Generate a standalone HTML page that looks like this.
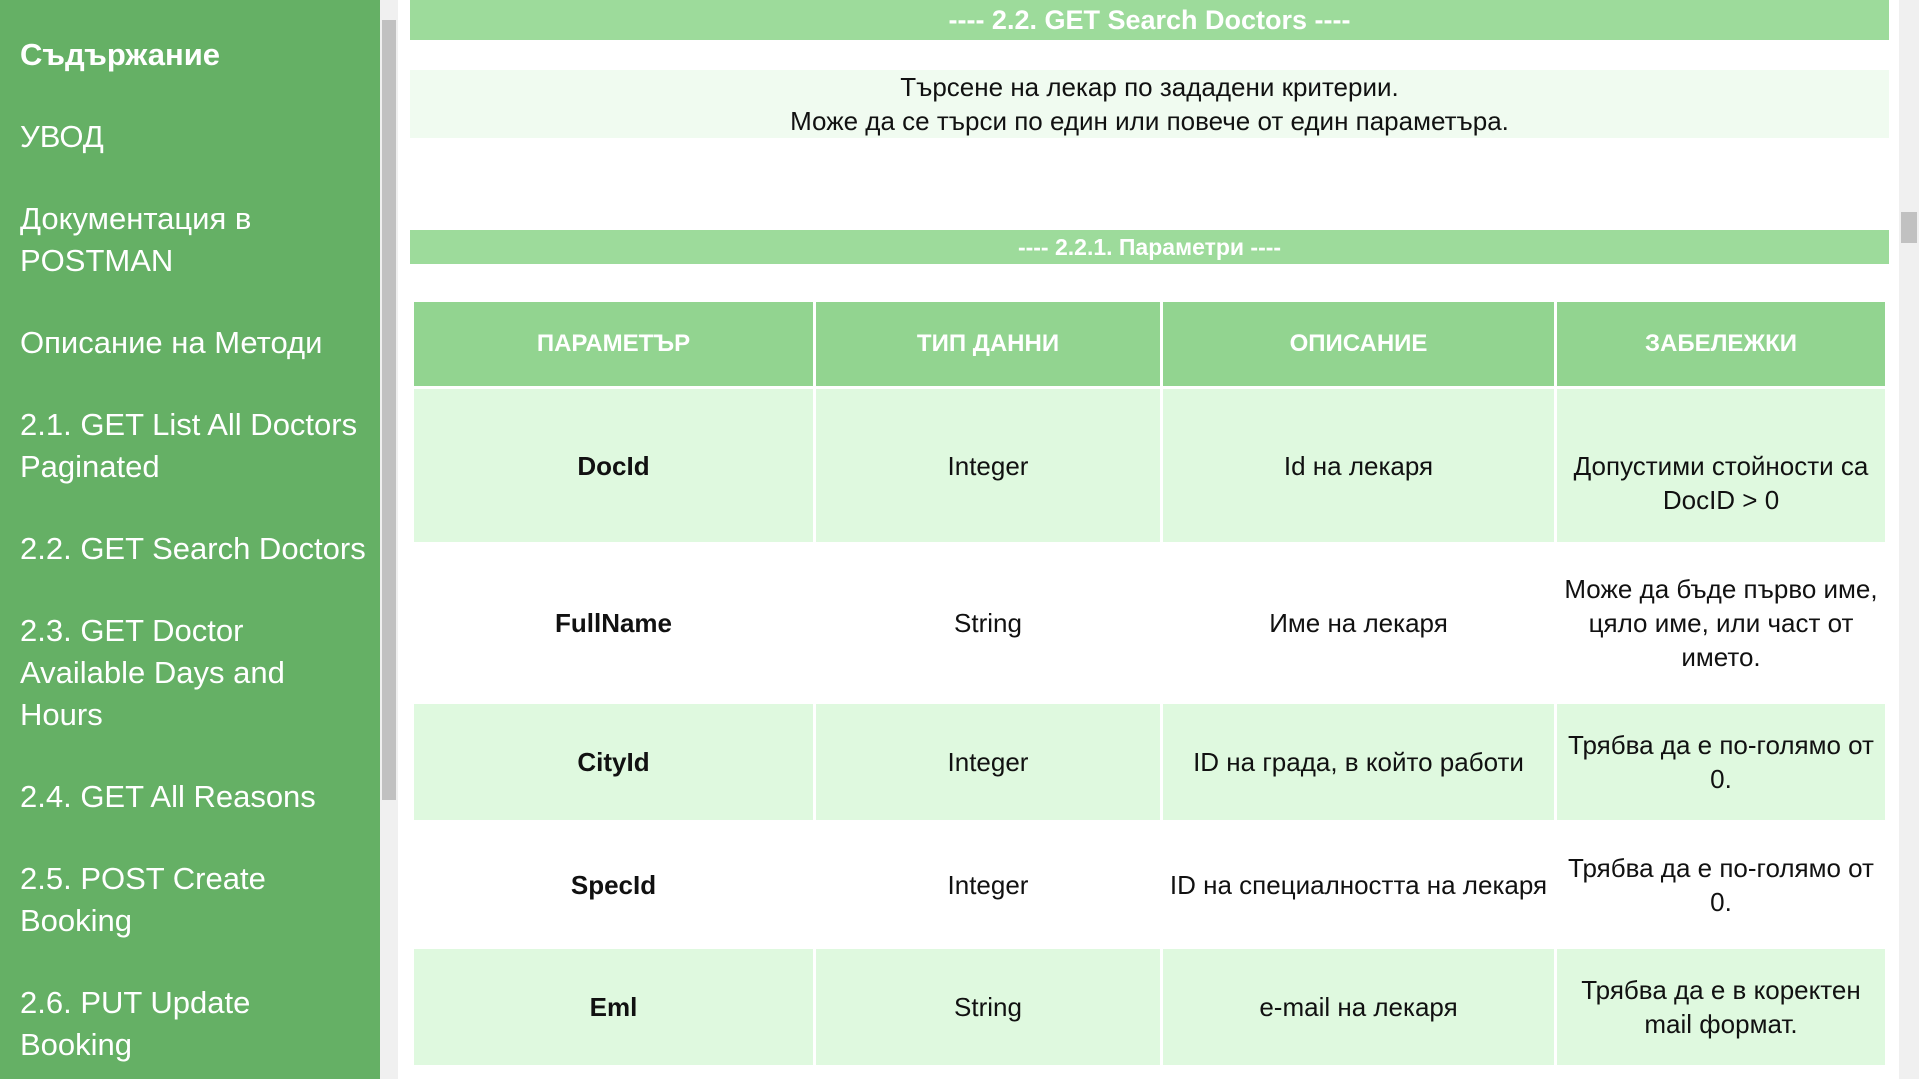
<!DOCTYPE html>
<html><head><meta charset="utf-8"><style>
*{margin:0;padding:0;box-sizing:border-box}
html,body{overflow:hidden}
body{width:1919px;height:1079px;background:#fff;font-family:"Liberation Sans",sans-serif;position:relative}
#side{position:absolute;left:0;top:0;width:380px;height:1079px;background:#65b065;color:#fff;padding:34px 0 0 20px;overflow:hidden}
#side div{font-size:31px;line-height:42px;margin-bottom:40px;white-space:nowrap}
#side div.h{font-weight:bold;margin-bottom:40px}
#sb{position:absolute;left:380px;top:0;width:18px;height:1079px;background:#f0f0f0}
#sb i{position:absolute;left:2px;top:20px;width:14px;height:780px;background:#c1c1c1}
#psb{position:absolute;left:1899px;top:0;width:20px;height:1079px;background:#f0f0f0}
#psb i{position:absolute;left:2px;top:212px;width:16px;height:31px;background:#c1c1c1}
.bar{position:absolute;left:410px;width:1479px;background:#9ddb9b;color:#fff;font-weight:bold;text-align:center}
#desc{position:absolute;left:410px;top:70px;width:1479px;height:68px;background:#f0fbf0;text-align:center;font-size:26px;line-height:34px;color:#111}
table{position:absolute;left:411px;top:299px;width:1477px;border-collapse:collapse;font-size:26px;color:#111}
td,th{border:3px solid #fff;text-align:center;line-height:34px;padding:0 6px}
th{background:#92d490;color:#fff;height:87px;font-size:24px}
tr.g td{background:#dff9df}
td.b{font-weight:bold}
</style></head><body>
<div id="side">
<div class="h">Съдържание</div>
<div>УВОД</div>
<div>Документация в<br>POSTMAN</div>
<div>Описание на Методи</div>
<div>2.1. GET List All Doctors<br>Paginated</div>
<div>2.2. GET Search Doctors</div>
<div>2.3. GET Doctor<br>Available Days and<br>Hours</div>
<div>2.4. GET All Reasons</div>
<div>2.5. POST Create<br>Booking</div>
<div>2.6. PUT Update<br>Booking</div>
</div>
<div id="sb"><i></i></div>
<div class="bar" style="top:0;height:40px;font-size:27px;line-height:40px">---- 2.2. GET Search Doctors ----</div>
<div id="desc">Търсене на лекар по зададени критерии.<br>Може да се търси по един или повече от един параметъра.</div>
<div class="bar" style="top:230px;height:34px;font-size:23px;line-height:34px">---- 2.2.1. Параметри ----</div>
<table>
<tr><th style="width:402px">ПАРАМЕТЪР</th><th style="width:347px">ТИП ДАННИ</th><th style="width:394px">ОПИСАНИЕ</th><th>ЗАБЕЛЕЖКИ</th></tr>
<tr class="g" style="height:156px"><td class="b">DocId</td><td>Integer</td><td>Id на лекаря</td><td style="padding-top:34px">Допустими стойности са<br>DocID &gt; 0</td></tr>
<tr style="height:159px"><td class="b">FullName</td><td>String</td><td>Име на лекаря</td><td>Може да бъде първо име,<br>цяло име, или част от<br>името.</td></tr>
<tr class="g" style="height:119px"><td class="b">CityId</td><td>Integer</td><td>ID на града, в който работи</td><td>Трябва да е по-голямо от<br>0.</td></tr>
<tr style="height:126px"><td class="b">SpecId</td><td>Integer</td><td>ID на специалността на лекаря</td><td>Трябва да е по-голямо от<br>0.</td></tr>
<tr class="g" style="height:119px"><td class="b">Eml</td><td>String</td><td>e-mail на лекаря</td><td>Трябва да е в коректен<br>mail формат.</td></tr>
</table>
<div id="psb"><i></i></div>
</body></html>
